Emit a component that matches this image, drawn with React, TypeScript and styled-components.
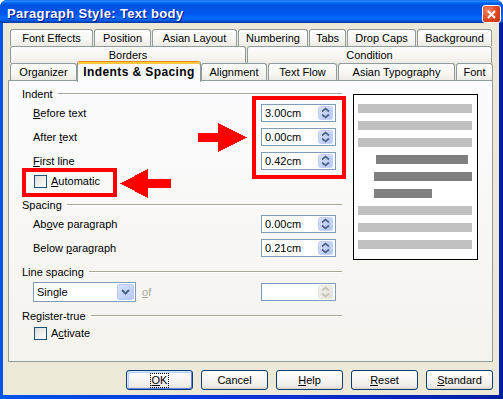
import styled, { createGlobalStyle } from "styled-components";

const GlobalStyle = createGlobalStyle`
  html, body {
    margin: 0;
    padding: 0;
    background: #fff;
  }
  body {
    font-family: "Liberation Sans", Arial, sans-serif;
    font-size: 11px;
    color: #000;
  }
`;

const Window = styled.div`
  position: relative;
  width: 503px;
  height: 399px;
  display: flex;
  flex-direction: column;
  background: linear-gradient(90deg, #0055ea 0%, #0831d9 50%, #001ea0 100%);
  border-radius: 7px 7px 0 0;
  overflow: hidden;
`;

const TitleBar = styled.div`
  height: 23px;
  flex: none;
  display: flex;
  align-items: center;
  justify-content: space-between;
  padding: 0 2px 0 7px;
  background: linear-gradient(
    180deg,
    #0058ee 0%,
    #3593ff 4%,
    #288eff 6%,
    #127dff 8%,
    #036ffc 10%,
    #0262ee 14%,
    #0057e5 20%,
    #0054e3 24%,
    #0055eb 56%,
    #005bf5 66%,
    #026afe 76%,
    #0062ef 86%,
    #0052d6 92%,
    #0040ab 97%,
    #003092 100%
  );
`;

const Title = styled.span`
  color: #fff;
  font-weight: bold;
  font-size: 13px;
  letter-spacing: 0.35px;
  text-shadow: 1px 1px #0f1089;
  margin-top: 4px;
`;

const CloseButton = styled.div`
  width: 19px;
  height: 18px;
  box-sizing: border-box;
  align-self: flex-start;
  margin-top: 5px;
  border: 1px solid #fff;
  border-radius: 3px;
  background: radial-gradient(circle at 30% 30%, #f08a68 0%, #e0451f 55%, #c23411 100%);
  display: flex;
  align-items: center;
  justify-content: center;
`;

const Body = styled.div`
  flex: 1;
  margin: 0 4px 4px 3px;
  background: #ece9d8;
  padding: 6px 6px 0 0;
  display: flex;
  flex-direction: column;
`;

const TabRow = styled.div`
  height: 17px;
  margin-left: 7px;
  display: flex;
  gap: 1px;
  align-items: flex-start;
`;

const Tab = styled.div<{ $w: number }>`
  width: ${(p) => p.$w}px;
  height: 17px;
  box-sizing: border-box;
  flex: none;
  border: 1px solid #919b9c;
  border-bottom: none;
  border-radius: 3px 3px 0 0;
  background: linear-gradient(#fefefe, #f7f6f2 60%, #ecebe6);
  display: flex;
  align-items: center;
  justify-content: center;
  white-space: nowrap;
  padding-bottom: 1px;
`;

const ActiveTab = styled(Tab)`
  height: 21px;
  margin-top: -2px;
  margin-left: -1px;
  margin-right: -1px;
  width: ${(p) => p.$w + 2}px;
  position: relative;
  z-index: 1;
  border-top: 1px solid #e68b2c;
  box-shadow: inset 0 2px #ffc83c;
  background: #fcfcfe;
  font-weight: bold;
  font-size: 12px;
  letter-spacing: 0.4px;
  padding-bottom: 0;
`;

const Panel = styled.div`
  margin-left: 5px;
  width: 485px;
  height: 282px;
  box-sizing: border-box;
  border: 1px solid #919b9c;
  background: linear-gradient(#fcfcfe, #f4f3ee);
  padding: 5px 0 0 13px;
  display: flex;
  gap: 11px;
`;

const LeftColumn = styled.div`
  width: 320px;
  display: flex;
  flex-direction: column;
`;

const GroupHeader = styled.div<{ $gap?: number }>`
  height: 15px;
  margin-top: ${(p) => p.$gap ?? 0}px;
  display: flex;
  align-items: center;
  gap: 5px;
  white-space: nowrap;
`;

const Rule = styled.div`
  flex: 1;
  height: 0;
  border-top: 1px solid #aca899;
  border-bottom: 1px solid #fff;
`;

const FieldRow = styled.div<{ $h?: number }>`
  height: ${(p) => p.$h ?? 24}px;
  padding-left: 11px;
  display: flex;
  align-items: center;
`;

const FieldLabel = styled.span`
  flex: 1;
  white-space: nowrap;
`;

const SpinBox = styled.div<{ $disabled?: boolean }>`
  width: 75px;
  height: 18px;
  box-sizing: border-box;
  margin-left: auto;
  margin-right: 6px;
  border: 1px solid #7f9db9;
  background: #fff;
  display: flex;
  align-items: center;
  justify-content: space-between;
  padding: 0 2px 0 3px;
  color: ${(p) => (p.$disabled ? "#aca899" : "#000")};
`;

const CheckRow = styled.div<{ $h?: number }>`
  height: ${(p) => p.$h ?? 16}px;
  padding-left: 12px;
  display: flex;
  align-items: center;
  gap: 4px;
`;

const CheckBox = styled.div`
  width: 13px;
  height: 13px;
  box-sizing: border-box;
  border: 1px solid #1c5180;
  background: linear-gradient(135deg, #dcdcd7, #fff);
`;

const Select = styled.div`
  width: 103px;
  height: 20px;
  box-sizing: border-box;
  border: 1px solid #7f9db9;
  background: #fff;
  display: flex;
  align-items: center;
  justify-content: space-between;
  padding: 0 1px 0 3px;
`;

const DropButton = styled.div`
  width: 17px;
  height: 16px;
  box-sizing: border-box;
  border: 1px solid #b9c9ef;
  border-radius: 2px;
  background: linear-gradient(135deg, #d8e2fc, #b6c9f7);
  display: flex;
  align-items: center;
  justify-content: center;
`;

const OfLabel = styled.span`
  color: #aca899;
  margin-left: 6px;
`;

const Preview = styled.div`
  margin-top: 8px;
  width: 125px;
  height: 166px;
  box-sizing: border-box;
  border: 1px solid #000;
  background: #fff;
  padding: 9px 0 0 4px;
  display: flex;
  flex-direction: column;
  gap: 8px;
`;

const PreviewBar = styled.div<{ $indent?: number; $w?: number; $dark?: boolean }>`
  height: 9px;
  width: ${(p) => p.$w ?? 114}px;
  margin-left: ${(p) => p.$indent ?? 0}px;
  background: ${(p) => (p.$dark ? "#808080" : "#c0c0c0")};
`;

const ButtonRow = styled.div`
  margin-top: 8px;
  display: flex;
  justify-content: flex-end;
  gap: 8px;
`;

const Button = styled.div<{ $default?: boolean }>`
  width: 67px;
  height: 20px;
  box-sizing: border-box;
  border: 1px solid #003c74;
  border-radius: 3px;
  background: linear-gradient(180deg, #fff 0%, #f3f2ee 60%, #ecebe6 86%, #d6d0c5 100%);
  box-shadow: ${(p) =>
    p.$default ? "inset 1px 1px #cee7ff, inset -1px -1px #6982ee, inset 2px 2px #bccbf8" : "none"};
  display: flex;
  align-items: center;
  justify-content: center;
`;

const FocusText = styled.span`
  outline: 1px dotted #000;
  outline-offset: 0;
  padding: 0 1px;
  line-height: 13px;
`;

const RedFrame = styled.div<{ $x: number; $y: number; $w: number; $h: number }>`
  position: absolute;
  left: ${(p) => p.$x}px;
  top: ${(p) => p.$y}px;
  width: ${(p) => p.$w}px;
  height: ${(p) => p.$h}px;
  box-sizing: border-box;
  border: 4px solid #ff0000;
  z-index: 3;
`;

const ArrowSvg = styled.svg<{ $x: number; $y: number }>`
  position: absolute;
  left: ${(p) => p.$x}px;
  top: ${(p) => p.$y}px;
  z-index: 3;
`;

const SpinArrows = ({ disabled }: { disabled?: boolean }) => {
  const c = disabled ? "#c5c2b2" : "#4d6185";
  return (
    <svg width="15" height="14" viewBox="0 0 15 14">
      <defs>
        <linearGradient id={disabled ? "sgd" : "sg"} x1="0" y1="0" x2="1" y2="1">
          <stop offset="0" stopColor={disabled ? "#f4f3ee" : "#d8e2fc"} />
          <stop offset="1" stopColor={disabled ? "#e3e1d9" : "#b3c6f5"} />
        </linearGradient>
      </defs>
      <rect
        x="0.5"
        y="0.5"
        width="14"
        height="13"
        rx="2"
        fill={`url(#${disabled ? "sgd" : "sg"})`}
        stroke={disabled ? "#e8e6de" : "#c3d2f5"}
      />
      <polyline points="4,5.5 7.5,2.5 11,5.5" fill="none" stroke={c} strokeWidth="1.7" />
      <polyline points="4,8.5 7.5,11.5 11,8.5" fill="none" stroke={c} strokeWidth="1.7" />
    </svg>
  );
};

const Spin = ({ value, disabled }: { value?: string; disabled?: boolean }) => (
  <SpinBox $disabled={disabled}>
    <span>{value}</span>
    <SpinArrows disabled={disabled} />
  </SpinBox>
);

export default function App() {
  return (
    <>
      <GlobalStyle />
      <Window>
        <TitleBar>
          <Title>Paragraph Style: Text body</Title>
          <CloseButton>
            <svg width="9" height="9" viewBox="0 0 9 9">
              <path d="M1 1 L8 8 M8 1 L1 8" stroke="#fff" strokeWidth="2" />
            </svg>
          </CloseButton>
        </TitleBar>
        <Body>
          <TabRow>
            <Tab $w={83}>Font Effects</Tab>
            <Tab $w={57}>Position</Tab>
            <Tab $w={85}>Asian Layout</Tab>
            <Tab $w={70}>Numbering</Tab>
            <Tab $w={37}>Tabs</Tab>
            <Tab $w={69}>Drop Caps</Tab>
            <Tab $w={75}>Background</Tab>
          </TabRow>
          <TabRow>
            <Tab $w={236}>Borders</Tab>
            <Tab $w={245}>Condition</Tab>
          </TabRow>
          <TabRow>
            <Tab $w={67}>Organizer</Tab>
            <ActiveTab $w={122}>Indents &amp; Spacing</ActiveTab>
            <Tab $w={66}>Alignment</Tab>
            <Tab $w={69}>Text Flow</Tab>
            <Tab $w={117}>Asian Typography</Tab>
            <Tab $w={37}>Font</Tab>
          </TabRow>
          <Panel>
            <LeftColumn>
              <GroupHeader>
                Indent
                <Rule />
              </GroupHeader>
              <FieldRow>
                <FieldLabel>
                  <u>B</u>efore text
                </FieldLabel>
                <Spin value="3.00cm" />
              </FieldRow>
              <FieldRow>
                <FieldLabel>
                  After <u>t</u>ext
                </FieldLabel>
                <Spin value="0.00cm" />
              </FieldRow>
              <FieldRow>
                <FieldLabel>
                  <u>F</u>irst line
                </FieldLabel>
                <Spin value="0.42cm" />
              </FieldRow>
              <CheckRow>
                <CheckBox />
                <span>
                  <u>A</u>utomatic
                </span>
              </CheckRow>

              <GroupHeader $gap={8}>
                Spacing
                <Rule />
              </GroupHeader>
              <FieldRow>
                <FieldLabel>
                  Ab<u>o</u>ve paragraph
                </FieldLabel>
                <Spin value="0.00cm" />
              </FieldRow>
              <FieldRow>
                <FieldLabel>
                  Below <u>p</u>aragraph
                </FieldLabel>
                <Spin value="0.21cm" />
              </FieldRow>

              <GroupHeader $gap={4}>
                Line spacing
                <Rule />
              </GroupHeader>
              <FieldRow $h={26}>
                <Select>
                  <span>Single</span>
                  <DropButton>
                    <svg width="9" height="6" viewBox="0 0 9 6">
                      <polyline points="1,1 4.5,4.5 8,1" fill="none" stroke="#4d6185" strokeWidth="2" />
                    </svg>
                  </DropButton>
                </Select>
                <OfLabel>
                  <u>o</u>f
                </OfLabel>
                <Spin disabled />
              </FieldRow>

              <GroupHeader $gap={3}>
                Register-true
                <Rule />
              </GroupHeader>
              <CheckRow $h={20}>
                <CheckBox />
                <span>
                  A<u>c</u>tivate
                </span>
              </CheckRow>
            </LeftColumn>
            <Preview>
              <PreviewBar />
              <PreviewBar />
              <PreviewBar />
              <PreviewBar $dark $indent={18} $w={92} />
              <PreviewBar $dark $indent={16} $w={98} />
              <PreviewBar $dark $indent={16} $w={58} />
              <PreviewBar />
              <PreviewBar />
              <PreviewBar />
            </Preview>
          </Panel>
          <ButtonRow>
            <Button $default>
              <FocusText>
                <u>O</u>K
              </FocusText>
            </Button>
            <Button>Cancel</Button>
            <Button>
              <span>
                <u>H</u>elp
              </span>
            </Button>
            <Button>
              <span>
                <u>R</u>eset
              </span>
            </Button>
            <Button>
              <span>
                <u>S</u>tandard
              </span>
            </Button>
          </ButtonRow>
        </Body>

        <RedFrame $x={252} $y={96} $w={94} $h={83} />
        <RedFrame $x={22} $y={168} $w={95} $h={29} />
        <ArrowSvg $x={198} $y={123} width="50" height="29" viewBox="0 0 50 29" shapeRendering="crispEdges">
          <polygon points="0,10 20,10 20,0 49,14.5 20,29 20,19 0,19" fill="#ff0000" />
        </ArrowSvg>
        <ArrowSvg $x={120} $y={169} width="52" height="29" viewBox="0 0 52 29" shapeRendering="crispEdges">
          <polygon points="0,14.5 28,0 28,10 51,10 51,19 28,19 28,29" fill="#ff0000" />
        </ArrowSvg>
      </Window>
    </>
  );
}
